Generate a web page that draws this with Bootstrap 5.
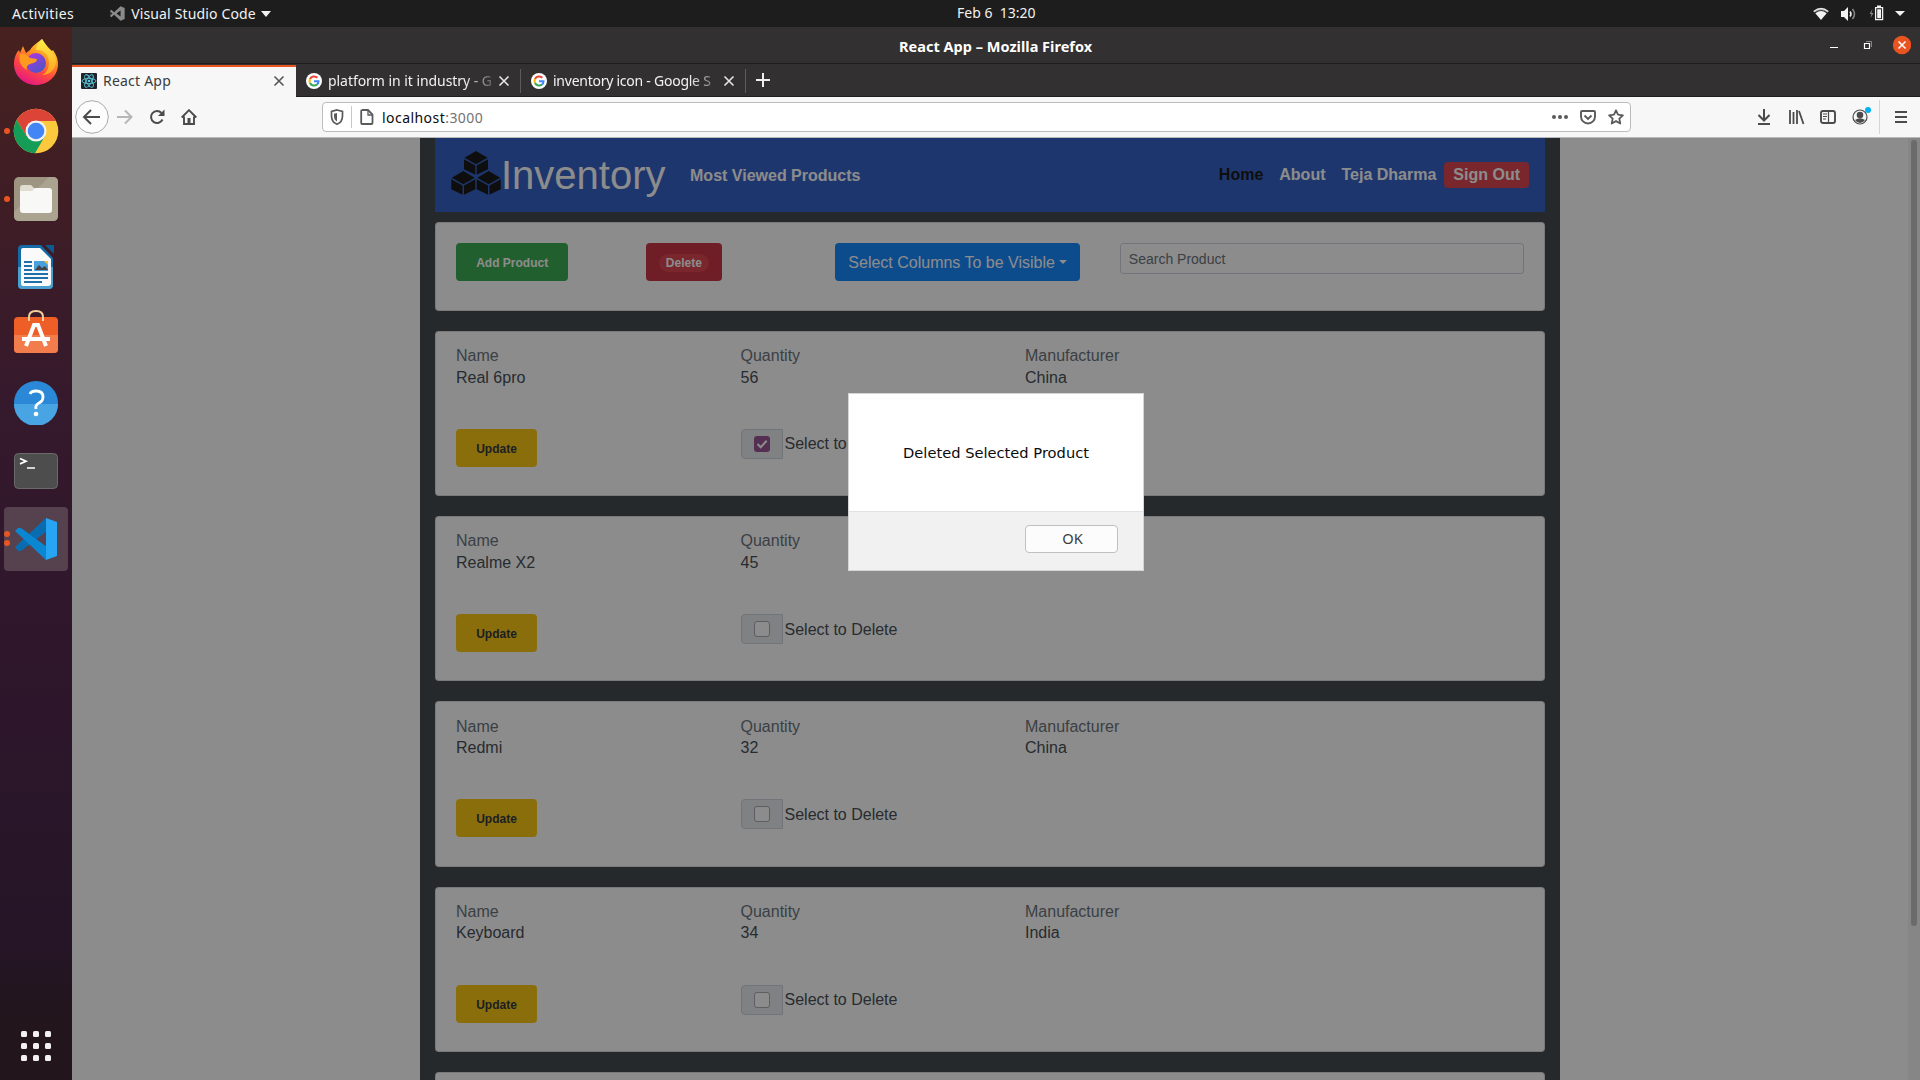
<!DOCTYPE html>
<html lang="en">
<head>
<meta charset="utf-8">
<title>React App</title>
<link href="https://cdn.jsdelivr.net/npm/bootstrap@5.3.0/dist/css/bootstrap.min.css" rel="stylesheet">
<style>
html,body{height:1080px;overflow:hidden}
body{font-family:"Noto Sans","Open Sans",sans-serif;font-size:14px;line-height:20px;color:#f2f2f2;background:#1d1d1d}
svg{display:block;flex:none}
.topbar{height:27px;background:#1d1d1d;padding:0 13px 0 12px;position:relative}
.clock{position:absolute;left:957px;top:3px;white-space:pre;letter-spacing:0}
.desk{height:1053px}
.dock{width:72px;background:linear-gradient(#47211f 0,#3c1c27 22%,#35192c 36%,#2e162b 62%,#251527 87%,#22151c 94%,#22151b);padding-top:2px}
.slot{height:68px;position:relative}
.run-dot{position:absolute;left:4px;width:6px;height:6px;border-radius:50%;background:#e95420}
.slot.current::before{content:"";position:absolute;left:4px;top:2px;width:64px;height:64px;border-radius:4px;background:#56414f}
.slot svg{position:relative}
.win{width:1848px}
.titlebar{height:37px;background:#333031;border-bottom:1px solid #1f1d1e;padding-right:9px}
.titlebar .caption{position:absolute;left:827px;top:9px;font-weight:700;font-size:14.5px;color:#fff;letter-spacing:.02px;white-space:nowrap}
.tabs{height:33px;background:#333031;border-bottom:1px solid #1f1d1e;padding-top:1px}
.tab{height:32px;padding:0 11px 0 10px;position:relative}
.tab.on{width:224px;background:#f7f7f7;color:#3b3b3b;border-top:2px solid #e95420;height:33px;margin-bottom:-1px;padding:0 11px 3px 9px}
.tab.off{width:225px}
.tab.off::after{content:"";position:absolute;right:0;top:4px;width:1px;height:24px;background:#5d5b5c}
.tab .cap{flex:1;margin-left:6px;white-space:nowrap;letter-spacing:-.05px;line-height:20px}
.tab.off .cap{-webkit-mask-image:linear-gradient(90deg,#000 80%,transparent 102%);mask-image:linear-gradient(90deg,#000 80%,transparent 102%)}
.tools{height:41px;background:#f7f7f7;border-bottom:1px solid #b9b9b9;padding-left:3px;padding-right:12px}
.urlbox{width:1309px;height:30px;border:1px solid #bcbcbc;border-radius:4px;background:#fff;margin-left:125px;padding:0 6px;color:#737373}
.urlbox b{font-weight:400;color:#0c0c0d}
.page{height:942px;overflow:hidden;background:#fff;font-family:"Liberation Sans",Arial,sans-serif;font-size:16px;line-height:24px;color:#495057;position:relative}
.shell{width:1140px;margin-left:348px;height:1100px;background:#454c51;padding:0 15px}
.nav-main{height:74px;background:#3863c8;color:#fff;padding:0 16px;--bs-navbar-padding-y:0}
.brand{font-size:40px;line-height:48px}
.nav-main .lnk{font-weight:700;white-space:nowrap}
.signout{font-weight:700;color:#fff;background:#dc4550;padding:0 9px;height:26px;line-height:26px;border:0;margin-left:8px;border-radius:4px}
.box-card{background:#fff;border:1px solid rgba(0,0,0,.125);border-radius:4px;margin-bottom:20px;height:165.2px}
.box-card.bar{height:89px;margin:10px 0 20px}
.box-card>.row{--bs-gutter-x:30px}
.fld{padding:14.2px 20px 0}
.fld .k{line-height:19.2px;color:#6c757d;margin-bottom:.3px}
.act{padding:39.3px 20px 0}
.px-20{padding-left:20px;padding-right:20px}
.pt-20{padding-top:20px}
.lbtn{height:38px;border:0;border-radius:4px;padding:0 13px;font-size:16px}
.lbtn .tag{font-size:12px;font-weight:700;line-height:18px;padding:0 7.2px;border-radius:10rem;display:inline-block;color:#fff}
.go{background:#3eae54}.del{background:#ca3645}.del .tag{background:#dc4552}.upd{background:#fec917}.upd .tag{color:#343a40}
.cols-btn{background:#188aff;color:#fff;white-space:nowrap;padding-top:2px}
.find{height:31px;font-size:14px;border:1px solid #ced4da;border-radius:3.2px;padding:0 8px;margin:0;box-shadow:none;color:#6c757d}
.find::placeholder{color:#6c757d;opacity:1}
.pick{width:42px;height:30px;border:1px solid #ced4da;background:#e9ecef;border-radius:4px 0 0 4px}
.pick i{width:16px;height:16px;border:1px solid #a9a9b3;border-radius:3px;background:#fff;display:block}
.pick i.yes{border:0;background:#9c5796}
.veil{position:absolute;inset:0;background:rgba(0,0,0,.45)}
.sbar{position:absolute;right:0;top:0;width:12px;height:100%;background:#f5f5f5}
.sbar span{position:absolute;left:3px;top:2px;width:6px;height:786px;border-radius:3px;background:#c4c4c4}
.dlg{position:absolute;left:776px;top:255px;width:296px;height:178px;background:#fff;border:1px solid #d5d5d5;color:#0c0c0d;font-family:"DejaVu Sans","Noto Sans",sans-serif;font-size:14.67px}
.dlg .msg{height:118px;border-bottom:1px solid #e2e2e2}
.dlg .foot{height:58px;background:#f1f1f1;padding-right:25px;padding-bottom:5px}
.dlg button{width:93px;height:28px;border:1px solid #c0c0c0;border-radius:4px;background:#fcfcfc;color:#3c3c3c;font-family:"Noto Sans",sans-serif;padding:0 0 2px 2px}
</style>
<script src="https://cdn.jsdelivr.net/npm/bootstrap@5.3.0/dist/js/bootstrap.bundle.min.js"></script>
</head>
<body>
<header class="topbar d-flex align-items-center">
  <span style="letter-spacing:.38px">Activities</span>
  <svg style="margin-left:36px" width="15" height="15" viewBox="0 0 44 44"><path d="M31 1l12 5v32l-12 5L12 26l-8 7-3-2V13l3-2 8 7z" fill="#8a8a8a"/><path d="M31 13v18L19 22z" fill="#1d1d1d"/><path d="M1 17l6 5-6 5z" fill="#1d1d1d"/></svg>
  <span style="margin-left:6px;letter-spacing:.15px">Visual Studio Code</span>
  <svg style="margin-left:5px" width="10" height="6"><path d="M0 0h10L5 6z" fill="#f2f2f2"/></svg>
  <span class="clock">Feb 6  13:20</span>
  <div class="ms-auto d-flex align-items-center">
    <svg width="16" height="14" viewBox="0 0 16 14"><path d="M0 4.200Q8-2.500 16 4.200L14.500 5.500Q8 1 1.500 5.500z" fill="#9b9b9b"/><path d="M.6 4Q8-1.800 15.400 4L14.700 4.700Q8-.2 1.300 4.700z" fill="#f2f2f2"/><path d="M2.300 6.200Q8 2 13.700 6.200L8 13z" fill="#f2f2f2"/></svg>
    <svg style="margin-left:12px" width="16" height="14" viewBox="0 0 16 14"><path d="M0 4h3l4-4v14l-4-4H0z" fill="#f2f2f2"/><path d="M9 4.500q2 2.500 0 5" stroke="#f2f2f2" fill="none" stroke-width="1.500"/><path d="M11.500 2q4 5 0 10" stroke="#888" fill="none" stroke-width="1.500"/></svg>
    <svg style="margin-left:12px;margin-top:-2px" width="15" height="16" viewBox="0 0 15 16"><path d="M3.500 4L.5 9h2l-1 4L4.500 8h-2z" fill="#8a8a8a"/><path d="M6.600 2.700h7v12h-7z" fill="none" stroke="#f2f2f2" stroke-width="1.300"/><path d="M8 .5h4V2H8zM8.200 4.300H12v8.900H8.200z" fill="#f2f2f2"/></svg>
    <svg style="margin:0 2px 0 11px" width="10" height="5"><path d="M0 0h10L5 5z" fill="#f2f2f2"/></svg>
  </div>
</header>
<div class="desk d-flex">
<aside class="dock d-flex flex-column">
  <div class="slot d-flex align-items-center justify-content-center">
    <svg style="top:-1px" width="46" height="48" viewBox="0 0 46 48"><defs><linearGradient id="ff1" x1=".8" y1="0" x2=".3" y2="1"><stop offset="0" stop-color="#fff44f"/><stop offset=".35" stop-color="#ff9a1e"/><stop offset=".65" stop-color="#ff4a3f"/><stop offset="1" stop-color="#e31587"/></linearGradient><linearGradient id="ff2" x1="0" y1="0" x2=".7" y2="1"><stop offset="0" stop-color="#b833e1"/><stop offset="1" stop-color="#4a57c9"/></linearGradient><linearGradient id="ff3" x1="0" y1="0" x2="0" y2="1"><stop offset="0" stop-color="#fff04a"/><stop offset="1" stop-color="#ffa01e"/></linearGradient></defs><path d="M29 1c2 5 6 8 10 12l1-1c4 6 5 10 5 14 0 12-10 21-22 21S1 38 1 26c0-6 2-11 5-14l1 3 3-7 3 7 4-3c3-5 7-7 12-11z" fill="url(#ff1)"/><path d="M29 1c-3 4-6 7-6 11 8-1 13 5 13 13 0 6-3 10-7 12 9 0 14-7 14-14 0-6-7-11-14-22z" fill="url(#ff3)"/><circle cx="23" cy="25" r="10" fill="url(#ff2)"/><path d="M7 16c4-1 7 1 10 4l7 1c0 3-3 4-7 5-3 1-4 3-3 6-6-3-9-9-7-16z" fill="#ff9a20"/></svg>
  </div>
  <div class="slot d-flex align-items-center justify-content-center"><span class="run-dot" style="top:31px"></span>
    <svg width="46" height="46" viewBox="-23 -23 46 46"><circle r="22.300" fill="#fcc93e"/><path d="M-19.300-11A22.300 22.300 0 0 1 20-10H0L-9.500 5z" fill="#dc4437"/><path d="M-19.300-11A22.300 22.300 0 0 0-1 22.300L9 5H-9.500z" fill="#159d58"/><circle r="10.500" fill="#f1f1f1"/><circle r="8.300" fill="#4285f4"/></svg>
  </div>
  <div class="slot d-flex align-items-center justify-content-center"><span class="run-dot" style="top:31px"></span>
    <svg width="46" height="46" viewBox="0 0 46 46"><rect x="1" y="1" width="44" height="44" rx="5" fill="#9d9581"/><path d="M1 36L36 1h4q5 0 5 5v34q0 5-5 5H6q-5 0-5-5z" fill="#aaa38f"/><path d="M7 12q0-3 3-3h8l4 4h14v8H7z" fill="#e0ddd0"/><path d="M7 15h12l3-3h14q3 0 3 3v19q0 3-3 3H10q-3 0-3-3z" fill="#f8f8f7"/></svg>
  </div>
  <div class="slot d-flex align-items-center justify-content-center">
    <svg width="38" height="46" viewBox="0 0 38 46"><path d="M5 1h19l12 13v27q0 4-4 4H5q-4 0-4-4V5q0-4 4-4z" fill="#156aa5"/><path d="M1 23h35v18q0 4-4 4H5q-4 0-4-4z" fill="#4ba0cf"/><path d="M28 1h9v9z" fill="#0c5a92"/><path d="M6 4h17l11 11v24q0 3-3 3H6q-2 0-2-3V6q0-2 2-2z" fill="#fafafa"/><path d="M7 18h8M7 22h8M7 26h8M7 30h24M7 34h24M7 38h18" stroke="#1d70aa" stroke-width="2"/><path d="M17 17h14v10H17z" fill="#48a0de"/><path d="M18 26l4-5 3 3 3-2 3 4z" fill="#444"/><path d="M27 17h4v4z" fill="#f8c22e"/></svg>
  </div>
  <div class="slot d-flex align-items-center justify-content-center">
    <svg width="46" height="46" viewBox="0 0 46 46" style="top:-3px"><rect x="1" y="8" width="44" height="36" rx="4" fill="#ee5f28"/><path d="M1 26h44v14q0 4-4 4H5q-4 0-4-4z" fill="#f27c4b"/><path d="M16 12V8q0-6 7-6t7 6v4" fill="none" stroke="#f4cf9d" stroke-width="2"/><path d="M13 37l8-21h4l8 21M9 30h28" fill="none" stroke="#fff" stroke-width="4"/></svg>
  </div>
  <div class="slot d-flex align-items-center justify-content-center">
    <svg style="top:-1px" width="46" height="46" viewBox="0 0 46 46"><circle cx="23" cy="24" r="22" fill="#2a88d6"/><path d="M1 25a22 22 0 0 0 44 0z" fill="#48a4e2"/><path d="M17 15q1-3 6-3 7 0 7 6 0 4-4 6t-3 6" fill="none" stroke="#fff" stroke-width="2.800"/><circle cx="23" cy="35" r="2.300" fill="#fff"/></svg>
  </div>
  <div class="slot d-flex align-items-center justify-content-center">
    <svg width="46" height="38" viewBox="0 0 46 38"><rect x="1.500" y="1.500" width="43" height="35" rx="4" fill="#4d4d4d" stroke="#6a6a6a"/><path d="M7 6.500l6 2.700-6 2.700M14 16h8" fill="none" stroke="#fff" stroke-width="1.700"/></svg>
  </div>
  <div class="slot current d-flex align-items-center justify-content-center"><span class="run-dot" style="top:26px"></span><span class="run-dot" style="top:35px"></span>
    <svg width="44" height="44" viewBox="0 0 44 44"><path d="M32 1L1 30l3 4h3L33 14z" fill="#0a6cb0"/><path d="M1 14l3-3h3l26 19-1 13z" fill="#0b86d1"/><path d="M32 1l11 4v34l-11 4z" fill="#27a5f2"/></svg>
  </div>
  <svg class="mt-auto mx-auto" style="margin-bottom:19px" width="30" height="30" viewBox="0 0 30 30" fill="#f2f0f0"><g id="dots3"><rect width="6" height="6" rx="1.500"/><rect x="12" width="6" height="6" rx="1.500"/><rect x="24" width="6" height="6" rx="1.500"/></g><use href="#dots3" y="12"/><use href="#dots3" y="24"/></svg>
</aside>
<main class="win">
  <div class="titlebar d-flex align-items-center justify-content-end position-relative">
    <span class="caption">React App – Mozilla Firefox</span>
    <svg width="82" height="20" viewBox="0 0 82 20"><path d="M1 12.500h8M35.500 8.500h5v5h-5z" stroke="#fff" stroke-width="1.200" fill="none"/><path d="M37 6.500h5.500V12" stroke="#888" fill="none"/><circle cx="73" cy="10" r="9.200" fill="#e95420"/><path d="M69.500 6.500l7 7m0-7l-7 7" stroke="#fff" stroke-width="1.500"/></svg>
  </div>
  <div class="tabs d-flex">
    <div class="tab on d-flex align-items-center">
      <svg width="16" height="16" viewBox="0 0 16 16"><rect width="16" height="16" rx="1" fill="#20232a"/><g fill="none" stroke="#5cc8e0" stroke-width=".9"><ellipse cx="8" cy="8" rx="7" ry="2.700"/><ellipse cx="8" cy="8" rx="7" ry="2.700" transform="rotate(60 8 8)"/><ellipse cx="8" cy="8" rx="7" ry="2.700" transform="rotate(120 8 8)"/></g><circle cx="8" cy="8" r="1.300" fill="#5cc8e0"/></svg>
      <span class="cap" style="letter-spacing:.22px">React App</span>
      <svg width="12" height="12" viewBox="0 0 12 12"><path d="M1.500 1.500l9 9m0-9l-9 9" stroke="#555" stroke-width="1.600"/></svg>
    </div>
    <div class="tab off d-flex align-items-center">
      <svg id="goog" width="16" height="16" viewBox="0 0 16 16"><circle cx="8" cy="8" r="8" fill="#fff"/><g fill="none" stroke-width="2.100"><path d="M4 6A4.600 4.600 0 0 1 11.300 4.800" stroke="#ea4335"/><path d="M4 6A4.600 4.600 0 0 0 4 10" stroke="#fbbc05"/><path d="M4 10A4.600 4.600 0 0 0 11 11.500" stroke="#34a853"/><path d="M8 8.300h4.500Q12.500 10.500 11 11.500" stroke="#4285f4"/></g></svg>
      <span class="cap">platform in it industry - G</span>
      <svg width="12" height="12" viewBox="0 0 12 12"><path d="M1.500 1.500l9 9m0-9l-9 9" stroke="#e6e6e6" stroke-width="1.600"/></svg>
    </div>
    <div class="tab off d-flex align-items-center">
      <svg width="16" height="16"><use href="#goog"/></svg>
      <span class="cap" style="letter-spacing:-.25px">inventory icon - Google S</span>
      <svg width="12" height="12" viewBox="0 0 12 12"><path d="M1.500 1.500l9 9m0-9l-9 9" stroke="#e6e6e6" stroke-width="1.600"/></svg>
    </div>
    <svg class="align-self-center" style="margin:-1px 0 0 10px" width="14" height="14" viewBox="0 0 14 14"><path d="M7 0v14M0 7h14" stroke="#f0f0f0" stroke-width="2"/></svg>
  </div>
  <div class="tools d-flex align-items-center">
    <svg width="34" height="34" viewBox="0 0 34 34"><circle cx="17" cy="17" r="16.300" fill="#fcfcfc" stroke="#a9a9a9"/><path d="M25 17H10m6-7l-7 7 7 7" fill="none" stroke="#4b4b4b" stroke-width="2"/></svg>
    <svg style="margin-left:8px" width="16" height="16" viewBox="0 0 16 16"><path d="M0 8h14M8 1.500L14.500 8 8 14.500" fill="none" stroke="#b6b6b6" stroke-width="2"/></svg>
    <svg style="margin-left:16px" width="16" height="16" viewBox="0 0 16 16"><path d="M13.500 10.500A6 6 0 1 1 12.500 4" fill="none" stroke="#4b4b4b" stroke-width="2"/><path d="M15.500.5v6.500H9z" fill="#4b4b4b"/></svg>
    <svg style="margin-left:16px" width="16" height="16" viewBox="0 0 16 16"><path d="M.7 8.500L8 1.200l7.300 7.300M3 7.500V15h10V7.500" fill="none" stroke="#4b4b4b" stroke-width="1.900"/><path d="M6.500 9h3v6h-3z" fill="#4b4b4b"/></svg>
    <div class="urlbox d-flex align-items-center">
      <svg width="16" height="16" viewBox="0 0 16 16"><path d="M8 1l5.500 1.500V7q0 6-5.500 8.200Q2.500 13 2.500 7V2.500z" fill="none" stroke="#5a5a5a" stroke-width="1.700"/><path d="M8 4v8.500Q5 11 5 7V4.700z" fill="#5a5a5a"/></svg>
      <svg style="margin-left:6px" width="1" height="22"><path d="M0 0h1v22H0z" fill="#c9c9c9"/></svg>
      <svg style="margin-left:7px" width="16" height="16" viewBox="0 0 16 16"><path d="M3 1h6l4.500 4.500V14q0 1-1 1H3.200q-1 0-1-1V2q0-1 1-1z" fill="none" stroke="#5a5a5a" stroke-width="1.800"/><path d="M9 1v5h4.500" fill="none" stroke="#5a5a5a" stroke-width="1.300"/></svg>
      <span style="margin-left:7px;letter-spacing:.45px;padding-top:1px"><b>localhost</b>:3000</span>
      <svg class="ms-auto" width="16" height="16" viewBox="0 0 16 16" fill="#5a5a5a"><circle cx="2" cy="8" r="2"/><circle cx="8" cy="8" r="2"/><circle cx="14" cy="8" r="2"/></svg>
      <svg style="margin-left:12px" width="16" height="16" viewBox="0 0 16 16"><path d="M2 2h12q1 0 1 1v4.500a7 7 0 0 1-14 0V3q0-1 1-1z" fill="none" stroke="#5a5a5a" stroke-width="1.900"/><path d="M4.500 6.500L8 10l3.500-3.500" fill="none" stroke="#5a5a5a" stroke-width="1.900"/></svg>
      <svg style="margin-left:12px" width="16" height="16" viewBox="0 0 16 16"><path d="M8 1.300l2 4.400 4.900.6-3.600 3.300 1 4.900L8 12.100l-4.300 2.400 1-4.900L1.100 6.300 6 5.700z" fill="none" stroke="#5a5a5a" stroke-width="1.800" stroke-linejoin="round"/></svg>
    </div>
    <div class="ms-auto d-flex align-items-center">
      <svg width="16" height="16" viewBox="0 0 16 16"><path d="M8 0v11M2.500 6L8 11.500 13.500 6M2 15h12" fill="none" stroke="#4b4b4b" stroke-width="2"/></svg>
      <svg style="margin-left:16px" width="17" height="16" viewBox="0 0 17 16"><path d="M2 1v14M5.500 3v12M9 1v14M11 2l4.500 13" fill="none" stroke="#4b4b4b" stroke-width="1.800"/></svg>
      <svg style="margin-left:15px" width="16" height="16" viewBox="0 0 16 16"><rect x="1" y="2" width="14" height="12" rx="2" fill="none" stroke="#4b4b4b" stroke-width="1.900"/><path d="M8.500 2v12M3 5h4M3 7.500h4M3 10h3" stroke="#4b4b4b" stroke-width="1.200"/></svg>
      <svg style="margin:-6px 0 0 16px" width="20" height="22" viewBox="0 0 20 22"><circle cx="8" cy="14" r="7" fill="none" stroke="#4b4b4b" stroke-width="1.200"/><circle cx="8" cy="12" r="3.300" fill="#4b4b4b"/><path d="M3 17q5-3.500 10 0-2 3-5 3t-5-3z" fill="#4b4b4b"/><circle cx="16" cy="7" r="3" fill="#00b3f4"/></svg>
      <svg style="margin-left:7px" width="1" height="34"><path d="M0 0h1v34H0z" fill="#d5d5d5"/></svg>
      <svg style="margin-left:14px" width="14" height="14" viewBox="0 0 14 14"><path d="M1 2h12M1 7h12M1 12h12" stroke="#4b4b4b" stroke-width="2"/></svg>
    </div>
  </div>
  <section class="page">
    <div class="shell">
      <nav class="nav-main navbar d-flex flex-nowrap align-items-center justify-content-start">
        <svg width="50" height="44" viewBox="0 0 50 44" style="margin-top:-5px" fill="#1a1a1a"><g id="cube"><path d="M25 0l11.500 6.800L25 13.200 13.500 6.800z"/><path d="M13 8.300l11.300 6.200v9.200L13 18.200zM37 8.300l-11.300 6.200v9.200L37 18.200z"/></g><use href="#cube" x="-12.700" y="20"/><use href="#cube" x="12.700" y="20"/></svg>
        <span class="brand">Inventory</span>
        <span class="lnk" style="margin-left:24.5px;padding-top:2px">Most Viewed Products</span>
        <span class="lnk ms-auto" style="color:#1a1a1a">Home</span>
        <span class="lnk ms-3">About</span>
        <span class="lnk ms-3">Teja Dharma</span>
        <button class="signout">Sign Out</button>
      </nav>
      <div class="box-card bar">
        <div class="row">
          <div class="col-2"><div class="px-20 pt-20"><button class="lbtn go"><span class="tag">Add Product</span></button></div></div>
          <div class="col-2"><div class="px-20 pt-20"><button class="lbtn del"><span class="tag">Delete</span></button></div></div>
          <div class="col-3"><div class="px-20 pt-20"><button class="lbtn cols-btn dropdown-toggle">Select Columns To be Visible</button></div></div>
          <div class="col-5"><div class="px-20 pt-20"><input class="find form-control" placeholder="Search Product"></div></div>
        </div>
      </div>
      <div id="items"></div>
      <div class="box-card"></div>
    </div>
    <div class="sbar"><span></span></div>
    <div class="veil"></div>
    <div class="dlg">
      <div class="msg d-flex align-items-center justify-content-center"><span>Deleted Selected Product</span></div>
      <div class="foot d-flex align-items-center justify-content-end"><button>OK</button></div>
    </div>
  </section>
</main>
</div>
<script>
const products=[["Real 6pro",56,"China",true],["Realme X2",45,"China",false],["Redmi",32,"China",false],["Keyboard",34,"India",false]];
const field=(k,v)=>`<div class="col-3"><div class="fld"><div class="k">${k}</div><div>${v}</div></div></div>`;
const tick='<svg width="16" height="16" viewBox="0 0 16 16"><path d="M3.500 8l3.200 3.200 6-6.400" fill="none" stroke="#fff" stroke-width="2"/></svg>';
document.getElementById("items").innerHTML=products.map(([n,q,m,on])=>`<div class="box-card"><div class="row">${field("Name",n)}${field("Quantity",q)}${field("Manufacturer",m)}</div>
<div class="row"><div class="col-3"><div class="act"><button class="lbtn upd"><span class="tag">Update</span></button></div></div>
<div class="col-3"><div class="act d-flex align-items-center"><span class="pick d-flex align-items-center justify-content-center"><i class="${on?"yes":""}">${on?tick:""}</i></span><span class="text-nowrap" style="margin-left:2px;padding-top:1px">Select to Delete</span></div></div></div></div>`).join("");
</script>
</body>
</html>
